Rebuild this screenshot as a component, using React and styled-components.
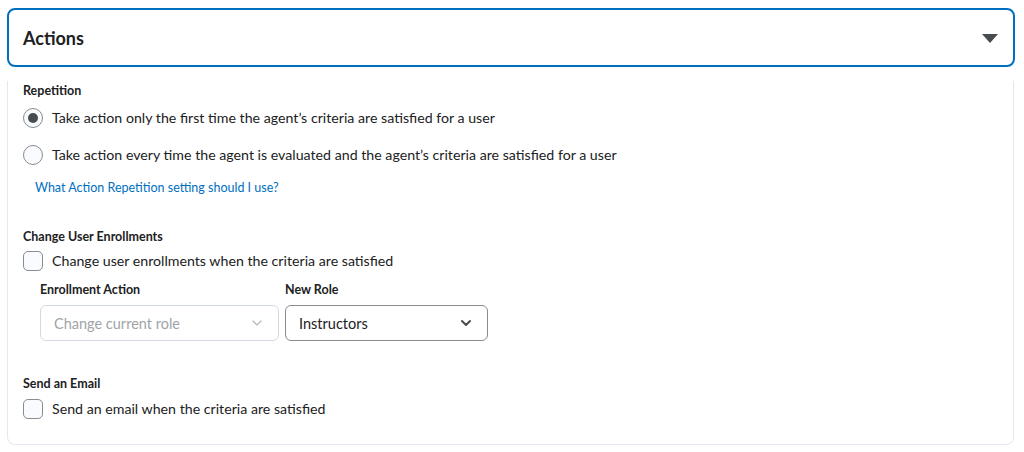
import styled, { createGlobalStyle } from "styled-components"

const GlobalStyle = createGlobalStyle`
  body {
    margin: 0;
    background: #ffffff;
    font-family: Lato, "Open Sans", sans-serif;
    color: #202122;
  }
`

export default function App() {
  return (
    <>
      <GlobalStyle />
      <Page>
        <Header>
          <Title>Actions</Title>
          <Caret />
        </Header>
        <Panel>
          <SectionLabel $top={14}>Repetition</SectionLabel>
          <OptionRow $top={7}>
            <Radio $checked />
            <OptionText>Take action only the first time the agent’s criteria are satisfied for a user</OptionText>
          </OptionRow>
          <OptionRow $top={17}>
            <Radio />
            <OptionText>Take action every time the agent is evaluated and the agent’s criteria are satisfied for a user</OptionText>
          </OptionRow>
          <HelpLink href="#">What Action Repetition setting should I use?</HelpLink>

          <SectionLabel $top={29}>Change User Enrollments</SectionLabel>
          <OptionRow $top={4}>
            <Checkbox />
            <OptionText>Change user enrollments when the criteria are satisfied</OptionText>
          </OptionRow>
          <Fields>
            <Field>
              <FieldLabel>Enrollment Action</FieldLabel>
              <Select $width={239} $disabled>
                <span>Change current role</span>
                <Chevron $disabled />
              </Select>
            </Field>
            <Field>
              <FieldLabel>New Role</FieldLabel>
              <Select $width={203}>
                <span>Instructors</span>
                <Chevron />
              </Select>
            </Field>
          </Fields>

          <SectionLabel $top={33}>Send an Email</SectionLabel>
          <OptionRow $top={5}>
            <Checkbox />
            <OptionText>Send an email when the criteria are satisfied</OptionText>
          </OptionRow>
        </Panel>
      </Page>
    </>
  )
}

function Caret() {
  return (
    <CaretIcon width="16" height="9" viewBox="0 0 16 9">
      <path d="M0 0h16L8 9z" fill="#494c4e" />
    </CaretIcon>
  )
}

function Chevron({ $disabled }) {
  return (
    <ChevronIcon width="12" height="8" viewBox="0 0 12 8">
      <path
        d="M2 2l4 4 4-4"
        fill="none"
        stroke={$disabled ? "#b4b9bd" : "#494c4e"}
        strokeWidth={$disabled ? "1.3" : "2"}
        strokeLinecap="round"
        strokeLinejoin="round"
      />
    </ChevronIcon>
  )
}

const Page = styled.div`
  padding: 8px 9px 0 7px;
`

const Header = styled.div`
  height: 59px;
  box-sizing: border-box;
  border: 2px solid #006fbf;
  border-radius: 8px;
  display: flex;
  align-items: center;
  justify-content: space-between;
  padding: 0 15px 0 14px;
`

const Title = styled.h2`
  margin: 0;
  font-size: 18px;
  font-weight: 700;
  color: #202122;
`

const CaretIcon = styled.svg`
  display: block;
  margin-top: 1px;
`

const Panel = styled.div`
  margin-right: 1px;
  border: 1px solid #e3e9f1;
  border-top: none;
  border-radius: 0 0 8px 8px;
  padding: 0 15px 25px 15px;
`

const SectionLabel = styled.div`
  margin-top: ${(p) => p.$top}px;
  font-size: 12.5px;
  font-weight: 700;
  line-height: 20px;
`

const OptionRow = styled.label`
  margin-top: ${(p) => p.$top}px;
  display: flex;
  align-items: center;
  gap: 9px;
  height: 20px;
`

const OptionText = styled.span`
  font-size: 14.2px;
  line-height: 20px;
`

const Radio = styled.span`
  width: 20px;
  height: 20px;
  box-sizing: border-box;
  border-radius: 50%;
  border: 1px solid #868c8f;
  background: #f9fbff;
  display: flex;
  align-items: center;
  justify-content: center;
  flex-shrink: 0;

  &::after {
    content: "";
    display: ${(p) => (p.$checked ? "block" : "none")};
    width: 10px;
    height: 10px;
    border-radius: 50%;
    background: #494c4e;
  }
`

const Checkbox = styled.span`
  width: 20px;
  height: 20px;
  box-sizing: border-box;
  border-radius: 5px;
  border: 1px solid #868c8f;
  background: #f9fbff;
  flex-shrink: 0;
`

const HelpLink = styled.a`
  display: block;
  margin: 13px 0 0 12px;
  font-size: 12.5px;
  line-height: 20px;
  color: #006fbf;
  text-decoration: none;
`

const Fields = styled.div`
  display: flex;
  gap: 6px;
  margin: 9px 0 0 17px;
`

const Field = styled.div`
  display: flex;
  flex-direction: column;
  gap: 5px;
`

const FieldLabel = styled.div`
  font-size: 12.5px;
  font-weight: 700;
  line-height: 20px;
`

const Select = styled.div`
  width: ${(p) => p.$width}px;
  height: 36px;
  box-sizing: border-box;
  border: 1px solid ${(p) => (p.$disabled ? "#d3d9e3" : "#868c8f")};
  border-radius: 6px;
  display: flex;
  align-items: center;
  justify-content: space-between;
  padding: 0 15px 0 13px;
  font-size: 14.5px;
  color: ${(p) => (p.$disabled ? "#a0a4a8" : "#202122")};
`

const ChevronIcon = styled.svg`
  display: block;
`
